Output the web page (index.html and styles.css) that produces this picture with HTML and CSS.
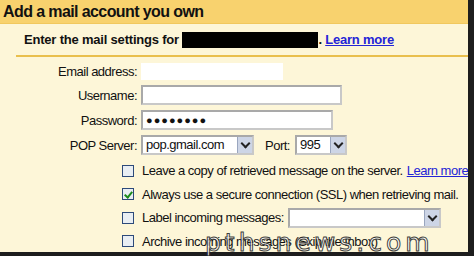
FILE: index.html
```html
<!DOCTYPE html>
<html lang="en">
<head>
    <meta charset="UTF-8">
    <title>Add a mail account you own</title>
    <link rel="stylesheet" href="styles.css">
</head>
<body>
    <div class="window">
        <div class="title">Add a mail account you own</div>

        <div class="intro">
            Enter the mail settings for <span class="redact"></span>. <a href="#">Learn more</a>
        </div>

        <div class="fields">
            <label>Email address:</label>
            <div class="box blank"></div>

            <label>Username:</label>
            <div class="box user"></div>

            <label>Password:</label>
            <div class="box pass">&#9679;&#9679;&#9679;&#9679;&#9679;&#9679;&#9679;&#9679;</div>

            <label>POP Server:</label>
            <div class="server">
                <div class="box select host">pop.gmail.com<span class="arrow"></span></div>
                <span class="port-label">Port:</span>
                <div class="box select port">995<span class="arrow"></span></div>
            </div>
        </div>

        <div class="options">
            <div class="opt"><span class="check"></span>Leave a copy of retrieved message on the server. <a href="#">Learn more</a></div>
            <div class="opt"><span class="check on"></span>Always use a secure connection (SSL) when retrieving mail.</div>
            <div class="opt"><span class="check"></span>Label incoming messages: <div class="box select label-pick"><span class="arrow"></span></div></div>
            <div class="opt"><span class="check"></span>Archive incoming messages (Skip the Inbox)</div>
        </div>
    </div>

    <div class="mark">pthsnews.com</div>
</body>
</html>
```

FILE: styles.css
```css
body {
    margin: 0;
    background-color: #1d1d1d;
    font-family: "Liberation Sans", Arial, sans-serif;
    overflow: hidden;
    position: relative;
    height: 256px;
}

.window {
    width: 468px;
    height: 252px;
    background-color: #fdf6d8;
    overflow: hidden;
    color: #111;
}

.title {
    height: 23px;
    line-height: 23px;
    padding-left: 3px;
    background-color: #f8d26e;
    border-bottom: 1px solid #f1c85e;
    font-size: 16px;
    font-weight: bold;
    letter-spacing: -0.6px;
}

.intro {
    margin-left: 16px;
    padding-left: 8px;
    height: 31px;
    line-height: 31px;
    border-bottom: 2px solid #e9bf4d;
    font-size: 13px;
    font-weight: bold;
    letter-spacing: -0.2px;
}

.intro a {
    color: #2424d6;
}

.redact {
    display: inline-block;
    width: 136px;
    height: 16px;
    background-color: #000;
    vertical-align: -4px;
}

.fields {
    display: grid;
    grid-template-columns: 137px 1fr;
    column-gap: 4px;
    row-gap: 5px;
    padding-top: 6px;
    font-size: 13px;
    letter-spacing: -0.5px;
    align-items: center;
}

.fields label {
    text-align: right;
}

.box {
    box-sizing: border-box;
    height: 20px;
    background-color: #fff;
    border: 2px solid #a9a9a9;
    border-right-color: #c8c8c8;
    border-bottom-color: #c8c8c8;
    font-size: 13px;
    line-height: 16px;
    padding-left: 3px;
    position: relative;
}

.blank {
    width: 142px;
    height: 17px;
    border: none;
}

.user {
    width: 201px;
}

.pass {
    width: 192px;
    font-size: 11px;
    letter-spacing: 1px;
}

.server {
    display: flex;
    align-items: center;
}

.select {
    padding-right: 18px;
}

.host {
    width: 113px;
}

.port-label {
    margin-left: 11px;
    margin-right: 5px;
}

.port {
    width: 52px;
}

.arrow {
    position: absolute;
    right: 0;
    top: 0;
    width: 14px;
    height: 16px;
    background-color: #cdd5e6;
    border-left: 1px solid #9aa6bf;
}

.arrow::after {
    content: "";
    position: absolute;
    left: 4px;
    top: 3px;
    width: 5px;
    height: 5px;
    border-right: 2px solid #222;
    border-bottom: 2px solid #222;
    transform: rotate(45deg);
}

.options {
    padding-left: 122px;
    padding-top: 4px;
    font-size: 13px;
    letter-spacing: -0.5px;
}

.opt {
    display: flex;
    align-items: center;
    height: 23.5px;
    white-space: nowrap;
}

.opt a {
    color: #2424d6;
    margin-left: 4px;
}

.check {
    box-sizing: border-box;
    width: 12px;
    height: 12px;
    border: 1px solid #2d4a7a;
    background-color: #e9eef3;
    margin-right: 8px;
    flex-shrink: 0;
    position: relative;
}

.check.on::after {
    content: "";
    position: absolute;
    left: 3px;
    top: 1px;
    width: 3px;
    height: 6px;
    border-right: 2px solid #1c8a1c;
    border-bottom: 2px solid #1c8a1c;
    transform: rotate(40deg);
}

.label-pick {
    width: 153px;
    margin-left: 4px;
}

.mark {
    position: absolute;
    left: 205px;
    top: 228px;
    font-family: "DejaVu Sans", sans-serif;
    font-size: 25px;
    letter-spacing: 4px;
    color: #fff;
    -webkit-text-stroke: 1px #222;
    opacity: 0.85;
}
```
